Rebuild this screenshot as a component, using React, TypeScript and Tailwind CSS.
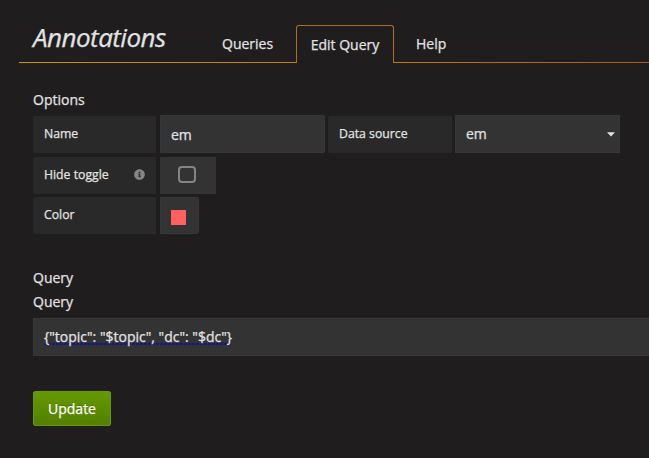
import type { ReactNode } from 'react';
import { FaInfoCircle } from 'react-icons/fa';

function Label({ width, children }: { width: string; children: ReactNode }) {
  return (
    <div
      className={`flex h-[37px] ${width} shrink-0 items-center justify-between rounded-l-[2px] bg-[#292929] pr-[11px] pb-[1px] pl-[11px] text-[12.25px]`}
    >
      {children}
    </div>
  );
}

const field = 'shrink-0 border border-[#373737] bg-[#333333]';

export default function App() {
  return (
    <div className="h-[458px] w-[649px] overflow-hidden bg-[#1f1d1e] font-['Open_Sans',sans-serif] text-[14px] leading-[20px] text-[#e3e3e3] [-webkit-text-stroke:0.25px]">
      <header className="flex h-[63px] pl-[19px]">
        <div className="flex w-[277px] border-b border-[#b98d0a] [border-image:linear-gradient(90deg,#c39a08,#bd7d12)_1]">
          <h1 className="mt-[19px] ml-[14px] w-[189px] text-[26px] leading-[36px] tracking-[-0.52px] italic">Annotations</h1>
          <span className="mt-[34px]">Queries</span>
        </div>
        <div className="mt-[25px] w-[98px] rounded-t-[3px] border border-b-0 border-[#b06f20] pt-[9px] text-center">
          Edit Query
        </div>
        <div className="flex-1 border-b [border-image:linear-gradient(90deg,#bd7a08,#b45a14)_1]">
          <span className="mt-[34px] ml-[22px] block">Help</span>
        </div>
      </header>

      <main className="pl-[33px]">
        <h2 className="mt-[27px] h-[25px]">Options</h2>
        <div className="flex items-end">
          <Label width="w-[123px]">Name</Label>
          <div className={`${field} ml-[4px] h-[38px] w-[165px] rounded-r-[2px] pt-[9px] pl-[10px]`}>em</div>
          <div className="ml-[3px]">
            <Label width="w-[124px]">Data source</Label>
          </div>
          <div className={`${field} ml-[3px] flex h-[38px] w-[165px] items-center justify-between pr-[4px] pl-[10px]`}>
            <span>em</span>
            <svg width="8" height="5" viewBox="0 0 8 5" className="mt-px">
              <path d="M0 .3h8L4 4.5z" fill="#e3e3e3" />
            </svg>
          </div>
        </div>
        <div className="mt-[4px] flex">
          <Label width="w-[123px]">
            <span>Hide toggle</span>
            <FaInfoCircle size={11} color="#858585" className="-mt-px" />
          </Label>
          <div className="ml-[4px] flex h-[37px] w-[56px] bg-[#333333] pt-[9px] pl-[18px]">
            <div className="h-[17px] w-[18px] rounded-[4px] border-2 border-[#858585]" />
          </div>
        </div>
        <div className="mt-[3px] flex">
          <Label width="w-[123px]">Color</Label>
          <div className={`${field} ml-[4px] h-[37px] w-[39px] rounded-r-[2px] pt-[12px] pl-[10px]`}>
            <div className="h-[15px] w-[15px] bg-[#ff6060]" />
          </div>
        </div>

        <h2 className="mt-[34px]">Query</h2>
        <h3 className="mt-[4px]">Query</h3>
        <div className={`${field} mt-[6px] flex h-[38px] border-r-0 pt-[8px] pl-[10px]`}>
          <span className="h-[18px] bg-[repeating-linear-gradient(90deg,#151590_0_3px,#30303c_3px_4px)] bg-[length:100%_2px] bg-bottom bg-no-repeat">
            {'{"topic": "$topic", "dc": "$dc"}'}
          </span>
        </div>
        <button className="mt-[35px] flex h-[35px] w-[78px] items-center justify-center rounded-[2px] border border-[#669900] bg-linear-to-b from-[#669900] to-[#538000] text-white [text-shadow:0_-1px_0_rgba(0,0,0,0.25)]">
          Update
        </button>
      </main>
      <div className="mt-[31px] h-px bg-[#191718]" />
    </div>
  );
}
